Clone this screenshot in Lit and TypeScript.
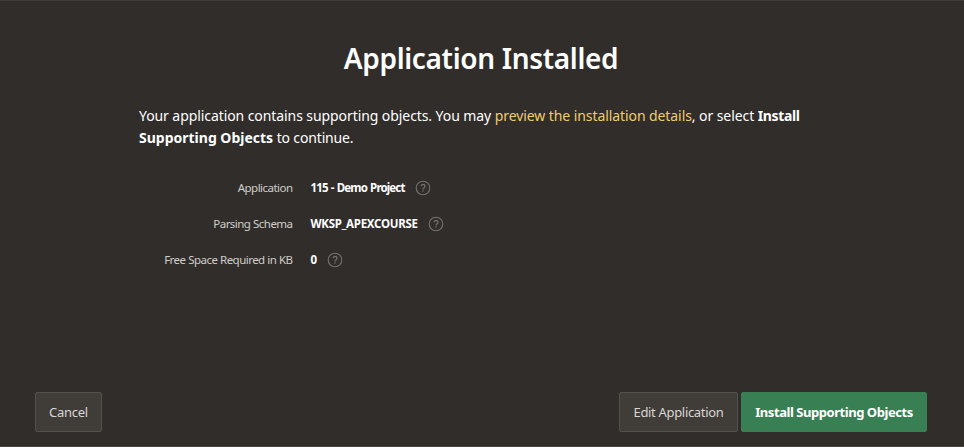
import { LitElement, html, css } from "lit";
import { customElement, property } from "lit/decorators.js";

@customElement("help-icon")
class HelpIcon extends LitElement {
  static styles = css`
    :host { display: block; width: 16px; height: 16px; color: #757370; }
    svg { display: block; }
  `;
  render() {
    return html`<svg width="16" height="16" viewBox="0 0 16 16" fill="none" stroke="currentColor">
      <circle cx="8" cy="8" r="6.8" stroke-width="1.1"></circle>
      <path d="M6.1 6.3a1.95 1.8 0 1 1 3.1 1.4C8.5 8.2 8 8.5 8 9.4" stroke-width="1.2"></path>
      <circle cx="8" cy="11.1" r=".75" fill="currentColor" stroke="none"></circle>
    </svg>`;
  }
}

@customElement("info-row")
class InfoRow extends LitElement {
  @property() label = "";
  @property() value = "";
  static styles = css`
    :host { display: flex; align-items: center; height: 36px; font-size: 11.5px; line-height: 16px; white-space: nowrap; }
    .label { width: 153.5px; text-align: right; color: #d0cecb; letter-spacing: -0.53px; word-spacing: 0.2px; }
    .value { margin: 0 10px 0 18px; font-weight: 700; color: #fff; letter-spacing: var(--value-tracking, 0); word-spacing: 1px; }
  `;
  render() {
    return html`<span class="label">${this.label}</span><span class="value">${this.value}</span><help-icon></help-icon>`;
  }
}

@customElement("app-root")
class AppRoot extends LitElement {
  static styles = css`
    :host {
      display: flex; flex-direction: column; box-sizing: border-box; height: 447px;
      border-top: 1px solid #403c39; border-bottom: 1px solid #494541;
      background: #312d2a; color: #fff; font-family: "Noto Sans", "Open Sans", sans-serif;
    }
    main { flex: 1; display: flex; flex-direction: column; }
    h1 { margin: 37px 2px 0 0; text-align: center; font-size: 28px; line-height: 40px; font-weight: 600; letter-spacing: -0.33px; }
    .intro { margin: 27px 0 0 139px; font-size: 14px; line-height: 22px; white-space: nowrap; }
    .copy { letter-spacing: -0.08px; }
    .tail { letter-spacing: -0.15px; }
    .name { letter-spacing: -0.35px; }
    .link { color: #f0cc71; }
    .rows { margin: 21px 0 0 139px; }
    .application { --value-tracking: -0.86px; }
    .schema { --value-tracking: -0.27px; }
    footer { display: flex; padding: 0 37px 14px 35px; gap: 3px; }
    button {
      box-sizing: border-box; height: 40px; padding: 0; border: 1px solid #53504b; border-radius: 2px;
      background: #403c38; color: #d9d7d5; font: 13px "Noto Sans", sans-serif; white-space: nowrap;
    }
    .cancel { width: 67px; margin-right: auto; letter-spacing: -0.25px; }
    .edit { width: 119px; letter-spacing: -0.32px; }
    .install { width: 186px; background: #397f54; border-color: #397f54; color: #fff; font-weight: 700; letter-spacing: -0.45px; }
  `;
  render() {
    return html`
      <main>
        <h1>Application Installed</h1>
        <p class="intro">
          <span class="copy">Your application contains supporting objects. You may <span class="link">preview the installation details</span>, or select </span><b class="name">Install</b><br />
          <b>Supporting Objects</b><span class="tail"> to continue.</span>
        </p>
        <div class="rows">
          <info-row class="application" label="Application" value="115 - Demo Project"></info-row>
          <info-row class="schema" label="Parsing Schema" value="WKSP_APEXCOURSE"></info-row>
          <info-row label="Free Space Required in KB" value="0"></info-row>
        </div>
      </main>
      <footer>
        <button class="cancel">Cancel</button>
        <button class="edit">Edit Application</button>
        <button class="install">Install Supporting Objects</button>
      </footer>
    `;
  }
}
